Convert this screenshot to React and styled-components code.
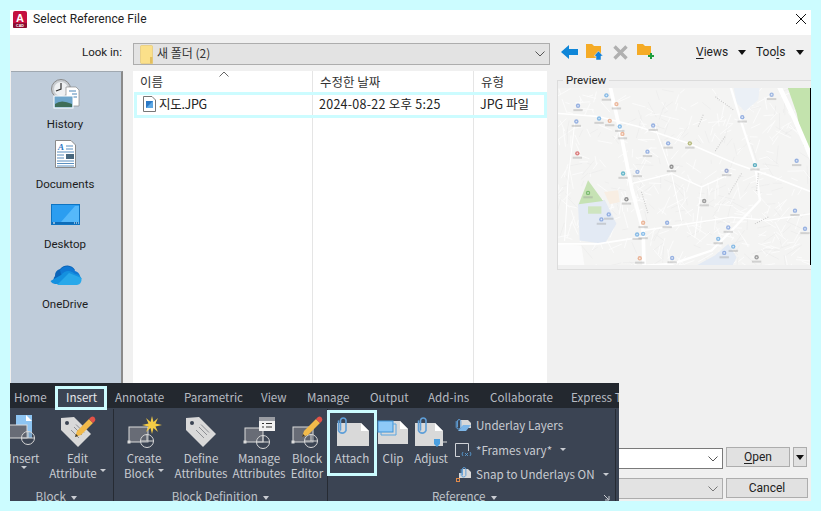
import React from "react";
import styled, { createGlobalStyle } from "styled-components";

const FONT = `Roboto, "Noto Sans CJK KR", sans-serif`;
const KFONT = `"Noto Sans CJK KR", sans-serif`;
const Global = createGlobalStyle`
  html, body { margin: 0; padding: 0; background: #ccfcff; }
  body { width: 821px; height: 511px; overflow: hidden; font-family: ${FONT}; }
  * { box-sizing: border-box; }
`;

const Page = styled.div`width: 821px; height: 511px; padding: 10px; background: #ccfcff;`;
const Dialog = styled.div`
  position: relative; width: 801px; height: 491px; background: #f0f0f0;
  display: flex; flex-direction: column; overflow: hidden; font-size: 11.5px; color: #1a1a1a;
`;
const TitleBar = styled.div`
  height: 25px; flex: none; background: #fff; display: flex; align-items: center;
  padding: 0 3px 7px 3px; gap: 6px; font-size: 12px; color: #222;
`;
const TitleText = styled.span`flex: 1; letter-spacing: .1px;`;
const LookRow = styled.div`height: 36px; flex: none; display: flex; align-items: flex-start; padding-top: 8px;`;
const LookLabel = styled.div`width: 112px; text-align: right; line-height: 18px; color: #222;`;
const LookCombo = styled.div`
  width: 417px; height: 22px; margin-left: 11px; background: #e3e3e3; border: 1px solid #adadad;
  display: flex; align-items: center; padding-left: 6px; gap: 4px; font-family: ${KFONT}; font-size: 12px; color: #333;
`;
const LookText = styled.span`margin-top: -3px;`;
const Chevron = styled.svg`width: 10px; height: 6px; margin-left: auto; margin-right: 4px; flex: none;`;
const ToolStrip = styled.div`display: flex; align-items: center; height: 18px; margin-left: 11px; flex: 1;`;
const ToolIcon = styled.svg`flex: none; margin-right: ${p => p.$mr}px;`;
const MenuLabel = styled.span`
  width: ${p => p.$w}px; flex: none; font-size: 12px; color: #222; white-space: nowrap;
  u { text-underline-offset: 2px; }
`;
const Triangle = styled.span`
  width: 0; height: 0; border-left: 4.5px solid transparent; border-right: 4.5px solid transparent;
  border-top: 5px solid #111; margin-right: ${p => p.$mr}px; flex: none;
`;
const Main = styled.div`
  display: grid; grid-template-columns: 112px 414px 254px; column-gap: 10px; margin-left: 1px;
  height: 370px; flex: none; align-items: start;
`;
const Places = styled.div`
  height: 370px; background: #bfccda; border-right: 2px solid #8a8a8a; border-top: 1px solid #a0a8b0;
  padding: 1px 2px 0 0; display: flex; flex-direction: column;
`;
const Place = styled.div`height: 60px; flex: none; display: flex; flex-direction: column; align-items: center;`;
const PlaceIcon = styled.div`height: 42px; display: flex; align-items: center; justify-content: center;`;
const PlaceLabel = styled.div`line-height: 16px; margin-top: 1px; color: #1c1c1c;`;

const FileList = styled.div`
  position: relative; height: 370px; background: #fff; display: grid; grid-template-columns: 180px 161px 73px; grid-template-rows: 22px 1fr;
  font-family: ${KFONT};
`;
const HeadCell = styled.div`
  border-right: ${p => (p.$last ? "none" : "1px solid #e5e5e5")}; padding: 2px 0 0 7px; font-size: 12.5px;
  color: #333; line-height: 18px; position: relative;
`;
const SortArrow = styled.svg`position: absolute; left: 86px; top: 0; width: 10px; height: 6px;`;
const BodyCell = styled.div`
  border-right: ${p => (p.$last ? "none" : "1px solid #e5e5e5")}; padding: 1px 0 0 ${p => p.$pad || 6}px;
  font-size: 12.5px; letter-spacing: ${p => p.$ls ?? 0.25}px; color: #222; line-height: 20px; white-space: nowrap; display: flex; align-items: flex-start; gap: 3px;
`;
const RowHighlight = styled.div`
  position: absolute; left: 1px; right: 0; top: 21px; height: 26px; border: 3px solid #ccfcff; pointer-events: none;
`;

const PreviewGroup = styled.fieldset`
  margin: 3px 0 0 0; padding: 0; height: 196px; border: 1px solid #dcdcdc; border-right: none; min-width: 0; background: #f0f0f0;
`;
const PreviewLegend = styled.legend`
  margin-left: 5px; padding: 0 3px; line-height: 12px; color: #222;
`;
const MapBox = styled.div`
  margin: 2px 0 0 0; width: 253px; height: 177px; background: #f4f4f3; border-right: 1px solid #000; overflow: hidden;
`;

const Footer = styled.div`flex: 1; padding: 6px 0 0 123px; display: flex; flex-direction: column; gap: 10px;`;
const FootRow = styled.div`display: flex; gap: 3px; height: 21px; align-items: flex-start;`;
const Combo = styled.div`
  flex: none; width: 590px; height: 21px; margin-top: ${p => p.$mt || 0}px; display: flex; align-items: center; justify-content: flex-end;
  background: ${p => (p.$white ? "#fff" : "#e3e3e3")}; border: 1px solid ${p => (p.$white ? "#7a7a7a" : "#adadad")};
`;
const FootButton = styled.div`
  width: ${p => p.$w}px; height: 20px; background: #e1e1e1; border: 1px solid #adadad; margin-left: ${p => p.$ml || 0}px;
  display: flex; align-items: center; justify-content: center; font-size: 12px; color: #222;
  u { text-underline-offset: 2px; }
`;

const Ribbon = styled.div`
  position: absolute; left: 0; top: 373px; width: 609px; height: 118px; background: #3b4453; overflow: hidden;
  color: #c8cbd1; font-family: ${KFONT}; font-size: 11.6px; display: flex; flex-direction: column;
`;
const TabRow = styled.div`height: 25px; flex: none; background: #23282f; display: flex; align-items: flex-start; padding: 2px 0 0 4px; white-space: nowrap;`;
const Tab = styled.span`
  position: relative; flex: none; width: ${p => p.$w}px; line-height: 25px; color: ${p => (p.$active ? "#e4e6ea" : "#b7bbc2")};
  ${p => p.$active && `&::before { content: ""; box-sizing: border-box; position: absolute; left: -11px; width: 52px; top: 1px; height: 24px; background: #3b4453; border: 3px solid #ccfcff; z-index: 0; }`}
  b { position: relative; font-weight: 400; z-index: 1; }
`;
const Groups = styled.div`display: flex; flex: 1; min-height: 0;`;
const Group = styled.div`
  position: relative; width: ${p => p.$w}px; flex: none; display: flex; flex-direction: column; margin-top: 1px;
  border-right: 1px solid #262b33;
`;
const Tools = styled.div`display: flex; height: 79px; flex: none; margin-left: ${p => p.$ml || 0}px;`;
const Tool = styled.div`
  position: relative; width: ${p => p.$w}px; flex: none; display: flex; flex-direction: column; align-items: center;
  white-space: nowrap; line-height: 15px; color: #c8cbd1;
  svg.big { display: block; flex: none; margin: 1px 0; }
  ${p => p.$hl && `&::after { content: ""; position: absolute; left: -1px; right: -1px; top: 1px; bottom: 12px; border: 3px solid #ccfcff; }`}
`;
const ToolLabel = styled.span`position: relative; display: block; text-align: center; letter-spacing: -.05px;`;
const MiniCaret = styled.span`
  display: inline-block; width: 0; height: 0; border-left: 3px solid transparent; border-right: 3px solid transparent;
  border-top: 3px solid #c9ccd2; margin-left: ${p => p.$ml ?? 0}px; vertical-align: ${p => p.$va ?? 2}px;
`;
const TitleCaret = styled(MiniCaret)`border-left-width: 3.5px; border-right-width: 3.5px; border-top-width: 4px; vertical-align: 1px;`;
const GroupTitle = styled.div`text-align: center; line-height: 16px; color: #bfc3c9; padding-right: ${p => p.$pr || 0}px; white-space: nowrap;`;
const CornerArrow = styled.svg`position: absolute; right: 5px; bottom: 0; width: 7px; height: 7px;`;
const SideList = styled.div`display: flex; flex-direction: column; margin-left: 3px; padding-top: 4px;`;
const SideRow = styled.div`
  display: flex; align-items: center; height: 24.5px; gap: 4px; white-space: nowrap; color: #c8cbd1;
  svg { flex: none; }
`;

const BlockShape = ({ x = 5, y = 17, w = 19, h = 15, cx = 23, cy = 31 }) => (
  <g>
    <rect x={x} y={y} width={w} height={h} fill="#686c76" stroke="#dcdcdc" strokeWidth="1" />
    <rect x={x - 1.5} y={y + h - 1.5} width="3" height="3" fill="#dcdcdc" />
    <circle cx={cx} cy={cy} r="6.5" fill="#3b4453" fillOpacity=".25" stroke="#d8d8d8" strokeWidth="1" />
    <path d={`M${cx} ${cy - 6.5}V${cy}M${cx - 6.5} ${cy}H${cx + 6.5}`} stroke="#d8d8d8" strokeWidth="1" />
  </g>
);
const Tag = ({ t = "" }) => (
  <g transform={t}>
    <path d="M5 8 L18 7 L35 24 L22 37 L5 20Z" fill="#d9d9d9" />
    <circle cx="11" cy="13" r="2" fill="#3b4453" />
    <path d="M15 20L23 28M18 17L26 25M20 14.5L28 22.5" stroke="#8d8f94" strokeWidth="1" />
  </g>
);
const Pencil = ({ t = "" }) => (
  <g transform={t}>
    <path d="M19 21L17 27L23 25L35 13L31 9Z" fill="#f2ba4a" />
    <path d="M17 27L18 24L20 26Z" fill="#333" />
    <path d="M31 9L33 7Q35 6 36.5 7.5Q38 9 37 11L35 13Z" fill="#e35247" />
  </g>
);
const Clip = ({ x = 11, y = 5, s = 1, c = "#5f9fd8" }) => (
  <path
    transform={`translate(${x} ${y}) scale(${s})`}
    d="M-2.5 13V3.2A2.8 2.8 0 0 1 3 3.2V13.5A4 4 0 0 1 -4.5 13.5V4"
    fill="none" stroke={c} strokeWidth="1.6" strokeLinecap="round"
  />
);
const Doc = ({ x, y, w, h, f = 8 }) => (
  <g>
    <path d={`M${x} ${y}H${x + w - f}L${x + w} ${y + f}V${y + h}H${x}Z`} fill="#d9d9d9" />
    <path d={`M${x + w - f} ${y}L${x + w} ${y + f}H${x + w - f}Z`} fill="#fff" />
  </g>
);
const Big = ({ children, w = 40 }) => <svg className="big" width={w} height="40" viewBox="0 0 40 40">{children}</svg>;

const seeded = n => {
  const out = [];
  let s = 7;
  const r = () => ((s = (s * 16807) % 2147483647) / 2147483647);
  for (let i = 0; i < n; i++) out.push([10 + r() * 755, 25 + r() * 528, r() * 3.14, 12 + r() * 45, r()]);
  return out;
};
const texture = seeded(520);
const pois = [
  [70,78,"#6f94d8"],[185,73,"#e59a72"],[155,47,"#5aa2e0"],[65,125,"#6f94d8"],[165,123,"#e59a72"],[133,116,"#5aa2e0"],
  [195,140,"#5aa2e0"],[295,137,"#6f94d8"],[203,162,"#e59a72"],[340,190,"#6f94d8"],[278,215,"#6f94d8"],[68,220,"#d04a4a"],
  [205,280,"#2a9db8"],[248,275,"#7b9cd8"],[350,260,"#666"],[405,190,"#9aa04a"],[515,272,"#7b8cc0"],[600,255,"#1d8fa8"],
  [562,112,"#6f94d8"],[650,45,"#7b9cd8"],[725,242,"#6f94d8"],[448,362,"#777"],[215,357,"#666"],[100,338,"#59a84f"],
  [140,417,"#6f94d8"],[162,402,"#6f94d8"],[265,427,"#e59a72"],[337,427,"#6f94d8"],[520,441,"#6f94d8"],[720,391,"#6f94d8"],
  [750,445,"#6f94d8"],[508,517,"#6f94d8"],[605,530,"#777"],[255,533,"#e59a72"],[352,532,"#6f94d8"],[247,462,"#5aa2e0"],
  [265,460,"#5aa2e0"],[490,475,"#5aa2e0"],[535,498,"#5aa2e0"],
];
const MapArt = () => (
  <svg width="252" height="177" viewBox="10 25 755 528" preserveAspectRatio="none" style={{ display: "block" }}>
    <defs>
      <filter id="b" x="-5%" y="-5%" width="110%" height="110%"><feGaussianBlur stdDeviation="1.6" /></filter>
    </defs>
    <g filter="url(#b)">
      <rect x="0" y="15" width="775" height="548" fill="#f4f4f3" />
      {texture.map(([x, y, a, l, k], i) => (
        <line key={i} x1={x} y1={y} x2={x + Math.cos(a) * l} y2={y + Math.sin(a) * l} stroke={k > 0.7 ? "#e9e9e8" : "#fdfdfd"} strokeWidth={k > 0.7 ? 1.5 : 2.5} />
      ))}
      <path d="M695 15H775V245L745 195L725 100Z" fill="#c3e3ad" />
      <path d="M535 15H615L610 60L570 95L545 70Z" fill="#ebf0f6" />
      <path d="M70 370L150 358L185 430L150 490L75 480Z" fill="#e3eaf4" />
      <path d="M100 300L145 362L72 372Z" fill="#c6e2b4" />
      <rect x="100" y="378" width="40" height="22" fill="#cfe5c0" />
      <path d="M415 560L480 525L520 490L545 530L530 560Z" fill="#e3eaf4" />
      <path d="M148 335L190 330L195 365L165 372Z" fill="#f8eee3" />
      <path d="M0 490L80 495L90 560H0Z" fill="#fbfbfb" />
      <g fill="none" stroke="#fff" strokeLinecap="round">
        <path d="M0 100L130 110L250 140L400 190L540 250L640 285L770 335" strokeWidth="5" />
        <path d="M165 15L200 170L232 330L265 450L268 560" strokeWidth="11" />
        <path d="M525 15L560 130L600 250L615 360L540 440L470 510L350 550L270 555" strokeWidth="7" />
        <path d="M670 15L720 120L770 235" strokeWidth="14" />
        <path d="M230 310L350 280L440 320L530 280" strokeWidth="4" />
        <path d="M265 450L400 430L530 410L640 420L770 400" strokeWidth="4" />
        <path d="M0 490L130 490L260 470" strokeWidth="5" />
        <path d="M440 320L420 470" strokeWidth="3" />
        <path d="M300 140L350 280L380 420" strokeWidth="3" />
        <path d="M60 130L40 300L30 480" strokeWidth="3" />
      </g>
      {pois.map(([x, y], i) => (
        <rect key={i} x={x - 14} y={y + 10} width="28" height="6" fill="#999" opacity=".38" />
      ))}
      <path d="M445 105L430 140M510 170L480 215M560 280L520 345M610 280L605 335M260 335L280 400M640 410L600 430M535 90L480 50" stroke="#aaa" strokeWidth="3" strokeDasharray="3 4" fill="none" opacity=".6" />
      {pois.map(([x, y, c], i) => (
        <g key={i}>
          <circle cx={x} cy={y} r="6.5" fill={c} opacity=".7" />
          <circle cx={x} cy={y} r="2.5" fill="#fff" opacity=".7" />
        </g>
      ))}
    </g>
  </svg>
);

export default function App() {
  return (
    <Page>
      <Global />
      <Dialog>
        <TitleBar>
          <svg width="14" height="17" viewBox="0 0 14 17">
            <rect x="0" y="0" width="14" height="17" rx="2" fill="#c5103f" />
            <rect x="0" y="12" width="14" height="5" rx="1" fill="#8c0c30" />
            <text x="7" y="10.5" fontSize="11" fontWeight="700" textAnchor="middle" fill="#fff" fontFamily="Liberation Sans">A</text>
            <text x="7" y="16.2" fontSize="3.6" fontWeight="700" textAnchor="middle" fill="#fff" fontFamily="Liberation Sans">CAD</text>
          </svg>
          <TitleText>Select Reference File</TitleText>
          <svg width="12" height="12" viewBox="0 0 12 12" style={{ marginRight: 1 }}>
            <path d="M1 1L11 11M11 1L1 11" stroke="#111" strokeWidth="1" />
          </svg>
        </TitleBar>
        <LookRow>
          <LookLabel>Look in:</LookLabel>
          <LookCombo>
            <svg width="13" height="19" viewBox="0 0 13 19">
              <path d="M0.5 1.5Q0.5 .5 1.5 .5H11.5Q12.5 .5 12.5 1.5V18.5H1.5Q.5 18.5 .5 17.5Z" fill="#fbe08a" stroke="#e6c66a" strokeWidth=".6" />
              <rect x="10" y="12" width="2.5" height="6.5" fill="#e3bf5e" />
            </svg>
            <LookText>새 폴더 (2)</LookText>
            <Chevron viewBox="0 0 10 6"><path d="M.5 .5L5 5L9.5 .5" fill="none" stroke="#555" strokeWidth="1" /></Chevron>
          </LookCombo>
          <ToolStrip>
            <ToolIcon $mr={8} width="17" height="16" viewBox="0 0 17 16">
              <path d="M0 8L8 1V5H17V11H8V15Z" fill="#0f86d8" />
            </ToolIcon>
            <ToolIcon $mr={10} width="17" height="18" viewBox="0 0 17 18">
              <path d="M0 1H6L8 3H15V15H0Z" fill="#f5ab26" />
              <path d="M12.500 8L17 13H15V17H10V13H8Z" fill="#1582d8" stroke="#f0f0f0" strokeWidth=".5" />
            </ToolIcon>
            <ToolIcon $mr={9} width="15" height="15" viewBox="0 0 15 15">
              <path d="M1.5 1.5L13.5 13.5M13.5 1.5L1.5 13.5" stroke="#b0b0b0" strokeWidth="3.4" />
            </ToolIcon>
            <ToolIcon $mr={42} width="17" height="16" viewBox="0 0 17 16">
              <path d="M0 0H6L8 2H14V11H0Z" fill="#f5ab26" />
              <path d="M11 11H13V9H15V11H17V13H15V15H13V13H11Z" fill="#1e9e3e" />
            </ToolIcon>
            <MenuLabel $w={42}><u>V</u>iews</MenuLabel>
            <Triangle $mr={10} />
            <MenuLabel $w={40}>Too<u>l</u>s</MenuLabel>
            <Triangle $mr={0} />
          </ToolStrip>
        </LookRow>
        <Main>
          <Places>
            <Place>
              <PlaceIcon>
                <svg width="30" height="30" viewBox="0 0 30 30">
                  <circle cx="11" cy="10" r="9.5" fill="#c9cdd1" stroke="#8a8a8a" />
                  <circle cx="11" cy="10" r="7" fill="#eef0f2" />
                  <path d="M11 4V10L6 12" stroke="#333" strokeWidth="1.2" fill="none" />
                  <path d="M16 8H26L29 11V27H16Z" fill="#fff" stroke="#8a8a8a" strokeWidth=".7" />
                  <path d="M19 12H26M22 15H27M22 18H27" stroke="#4c87b8" strokeWidth="1" />
                  <rect x="4" y="17" width="19" height="12" fill="#6ea6cc" stroke="#fff" />
                  <path d="M5 25Q11 20 22 25V28H5Z" fill="#3e6d58" />
                </svg>
              </PlaceIcon>
              <PlaceLabel>History</PlaceLabel>
            </Place>
            <Place>
              <PlaceIcon>
                <svg width="21" height="28" viewBox="0 0 21 28">
                  <path d="M.5 .5H16L20.5 5V27.5H.5Z" fill="#fff" stroke="#8a8a8a" />
                  <text x="3" y="10" fontSize="9" fontStyle="italic" fontWeight="700" fill="#2b78c5" fontFamily="Liberation Serif">A</text>
                  <path d="M11 6H18M11 9H18M2 12H19M2 21H19M2 23.500H19M2 26H19" stroke="#5a8fc0" strokeWidth="1" />
                  <path d="M2 15H9M2 18H9" stroke="#5a8fc0" strokeWidth="1" />
                  <rect x="11" y="14" width="8" height="5" fill="#48677d" />
                </svg>
              </PlaceIcon>
              <PlaceLabel>Documents</PlaceLabel>
            </Place>
            <Place>
              <PlaceIcon>
                <svg width="29" height="21" viewBox="0 0 29 21">
                  <rect x=".5" y=".5" width="28" height="20" fill="#2b9df0" stroke="#0e74c2" />
                  <path d="M10 18L24 2H28V18Z" fill="#55b8fa" />
                  <path d="M1 18H28V20H1Z" fill="#0d6cb8" />
                  <path d="M2 19H4M23 19H24M25 19H26M27 19H28" stroke="#fff" strokeWidth="1" />
                </svg>
              </PlaceIcon>
              <PlaceLabel>Desktop</PlaceLabel>
            </Place>
            <Place>
              <PlaceIcon>
                <svg width="33" height="22" viewBox="0 0 33 22">
                  <path d="M6 13A7 7 0 0 1 11 6A9 9 0 0 1 26 7L12 21H6A6 6 0 0 1 6 13Z" fill="#0c64b8" />
                  <path d="M11 7A9 9 0 0 1 26 8A7 7 0 0 1 31 13L21 17L12 11Z" fill="#0f78d4" />
                  <path d="M12 12Q17 6 23 9Q25 10 26 11Q31 11 32.500 16L22 21H7Q3 21 1.500 18Z" fill="#1490df" />
                  <path d="M8 22H28Q33 21 32.500 15L20 10Z" fill="#28a8ea" />
                </svg>
              </PlaceIcon>
              <PlaceLabel>OneDrive</PlaceLabel>
            </Place>
          </Places>
          <FileList>
            <HeadCell>이름<SortArrow viewBox="0 0 10 6"><path d="M.5 5.500L5 1L9.500 5.500" fill="none" stroke="#666" /></SortArrow></HeadCell>
            <HeadCell>수정한 날짜</HeadCell>
            <HeadCell $last>유형</HeadCell>
            <BodyCell $pad={10} $ls={-0.3}>
              <svg width="13" height="16" viewBox="0 0 13 16" style={{ marginTop: 2 }}>
                <path d="M.5 .5H9L12.500 4V15.500H.5Z" fill="#fff" stroke="#777" />
                <rect x="3" y="5" width="7" height="7" fill="#2b78c5" />
                <path d="M3 12L10 5V12Z" fill="#5ea8e4" />
              </svg>
              <span>지도.JPG</span>
            </BodyCell>
            <BodyCell>2024-08-22 오후 5:25</BodyCell>
            <BodyCell $last $pad={6} $ls={0}>JPG 파일</BodyCell>
            <RowHighlight />
          </FileList>
          <PreviewGroup>
            <PreviewLegend>Preview</PreviewLegend>
            <MapBox><MapArt /></MapBox>
          </PreviewGroup>
        </Main>
        <Footer>
          <FootRow>
            <Combo $white $mt={1}>
              <Chevron viewBox="0 0 10 6"><path d="M.5 .5L5 5L9.500 .5" fill="none" stroke="#555" /></Chevron>
            </Combo>
            <FootButton $w={64}><span><u>O</u>pen</span></FootButton>
            <FootButton $w={14}><Triangle $mr={0} /></FootButton>
          </FootRow>
          <FootRow>
            <Combo>
              <Chevron viewBox="0 0 10 6"><path d="M.5 .5L5 5L9.500 .5" fill="none" stroke="#777" /></Chevron>
            </Combo>
            <FootButton $w={82}>Cancel</FootButton>
          </FootRow>
        </Footer>
        <Ribbon>
          <TabRow>
            <Tab $w={52}>Home</Tab>
            <Tab $w={49} $active><b>Insert</b></Tab>
            <Tab $w={69}>Annotate</Tab>
            <Tab $w={77}>Parametric</Tab>
            <Tab $w={46}>View</Tab>
            <Tab $w={63}>Manage</Tab>
            <Tab $w={58}>Output</Tab>
            <Tab $w={62}>Add-ins</Tab>
            <Tab $w={81}>Collaborate</Tab>
            <Tab $w={48}>Express T</Tab>
          </TabRow>
          <Groups>
            <Group $w={104}>
              <Tools $ml={-11}>
                <Tool $w={50}>
                  <Big>
                    <rect x="12" y="5" width="16" height="23" fill="#8ec5f2" />
                    <path d="M22 5L28 11H22Z" fill="#fff" />
                    <BlockShape x={-1} y={15} w={24} h={13} cx={24} cy={28} />
                  </Big>
                  <ToolLabel>Insert</ToolLabel>
                  <MiniCaret $va={6} />
                </Tool>
                <Tool $w={57}>
                  <Big>
                    <Tag t="translate(-2 0)" />
                    <Pencil />
                  </Big>
                  <ToolLabel>Edit</ToolLabel>
                  <ToolLabel>Attribute<MiniCaret $ml={3} $va={6} /></ToolLabel>
                </Tool>
              </Tools>
              <GroupTitle $pr={10}>Block <TitleCaret $ml={3} /></GroupTitle>
            </Group>
            <Group $w={214}>
              <Tools>
                <Tool $w={60}>
                  <Big>
                    <BlockShape />
                    <path d="M28 6L29.500 12L34 8L31.500 13.500L38 15L31.500 16.500L34 22L29.500 18L28 24L26.500 18L22 22L24.500 16.500L18 15L24.500 13.500L22 8L26.500 12Z" fill="#f5cc45" />
                  </Big>
                  <ToolLabel>Create</ToolLabel>
                  <ToolLabel>Block<MiniCaret $ml={4} $va={6} /></ToolLabel>
                </Tool>
                <Tool $w={54}>
                  <Big><Tag /></Big>
                  <ToolLabel>Define</ToolLabel>
                  <ToolLabel>Attributes</ToolLabel>
                </Tool>
                <Tool $w={62}>
                  <Big>
                    <BlockShape x={6} y={18} w={18} h={14} cx={24} cy={32} />
                    <rect x="20" y="7" width="16" height="14" fill="#f2f2f2" />
                    <rect x="20" y="7" width="16" height="4" fill="#9a9da3" />
                    <path d="M23 13.500H25M27 13.500H33M23 17H25M27 17H33" stroke="#333" />
                  </Big>
                  <ToolLabel>Manage</ToolLabel>
                  <ToolLabel>Attributes</ToolLabel>
                </Tool>
                <Tool $w={34}>
                  <Big>
                    <BlockShape x={6} y={17} w={20} h={15} cx={24} cy={31} />
                    <Pencil t="translate(-2 0)" />
                  </Big>
                  <ToolLabel>Block</ToolLabel>
                  <ToolLabel>Editor</ToolLabel>
                </Tool>
              </Tools>
              <GroupTitle>Block Definition <TitleCaret $ml={3} /></GroupTitle>
            </Group>
            <Group $w={288}>
              <Tools>
                <Tool $w={48} $hl>
                  <Big>
                    <Doc x={5} y={13} w={32} h={23} />
                    <Clip x={11} y={7} />
                  </Big>
                  <ToolLabel>Attach</ToolLabel>
                </Tool>
                <Tool $w={34}>
                  <Big>
                    <Doc x={5} y={11} w={30} h={23} />
                    <rect x="5" y="11" width="15" height="11" fill="#8ec9f7" stroke="#3f93d6" />
                    <path d="M20 14H23V25H8V22" fill="none" stroke="#5aa5e0" />
                  </Big>
                  <ToolLabel>Clip</ToolLabel>
                </Tool>
                <Tool $w={42}>
                  <Big>
                    <Doc x={4} y={13} w={28} h={23} />
                    <Clip x={12} y={7} />
                    <path d="M19 32H36" stroke="#d9d9d9" />
                    <path d="M23 29H29V34L26 37L23 34Z" fill="#4a9fe0" />
                  </Big>
                  <ToolLabel>Adjust</ToolLabel>
                </Tool>
                <SideList>
                  <SideRow>
                    <svg width="17" height="17" viewBox="0 0 17 17">
                      <path d="M5 3H13L16 6V11H5Z" fill="#d9d9d9" />
                      <path d="M3 14L8 8H16L11 14Z" fill="#7db6e8" />
                      <Clip x={4} y={2} s={0.62} />
                    </svg>
                    <span>Underlay Layers</span>
                  </SideRow>
                  <SideRow>
                    <svg width="17" height="17" viewBox="0 0 17 17">
                      <path d="M.5 15.500V2.500H13.500V10" fill="none" stroke="#d0d3d8" />
                      <path d="M.5 15.500H5" stroke="#d0d3d8" />
                      <path d="M8 11Q6 13 8 15M15 11Q17 13 15 15M10 12L13 15M13 12L10 15" fill="none" stroke="#5aa5e0" strokeWidth=".8" />
                    </svg>
                    <span>*Frames vary*</span>
                    <MiniCaret $ml={4} />
                  </SideRow>
                  <SideRow>
                    <svg width="17" height="17" viewBox="0 0 17 17">
                      <path d="M4 7H7L8 3H13L16 6V12H4Z" fill="#d9d9d9" />
                      <Clip x={9} y={1} s={0.62} />
                      <rect x="1.500" y="12.500" width="3" height="3" fill="none" stroke="#e08a4a" />
                    </svg>
                    <span>Snap to Underlays ON</span>
                    <MiniCaret $ml={4} />
                  </SideRow>
                </SideList>
              </Tools>
              <GroupTitle $pr={14}>Reference <TitleCaret $ml={3} /></GroupTitle>
              <CornerArrow viewBox="0 0 7 7"><path d="M1 1L5.500 5.500M6 2V6H2" fill="none" stroke="#c9ccd2" /></CornerArrow>
            </Group>
          </Groups>
        </Ribbon>
      </Dialog>
    </Page>
  );
}
